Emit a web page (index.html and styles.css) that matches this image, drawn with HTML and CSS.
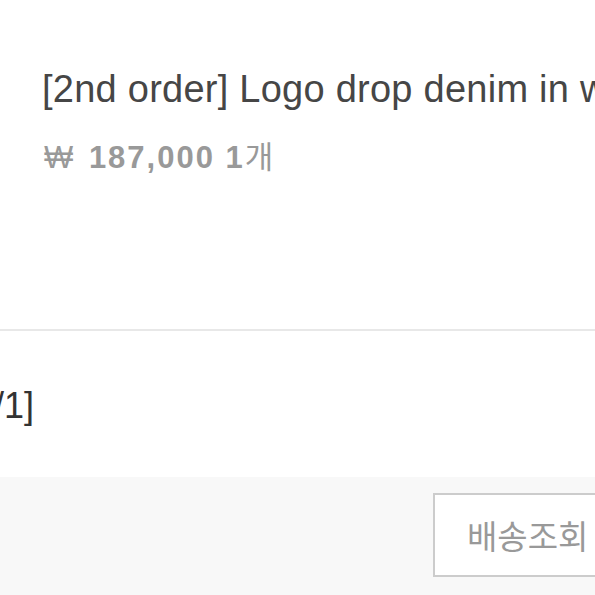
FILE: index.html
```html
<!DOCTYPE html>
<html lang="ko">
<head>
<meta charset="utf-8">
<link rel="stylesheet" href="styles.css">
</head>
<body>
<div class="page">
  <section class="product">
    <div class="title">[2nd order] Logo drop denim in washed black</div>
    <div class="price"><span class="won">₩</span> 187,000 1<span class="unit">개</span></div>
  </section>
  <div class="divider"></div>
  <div class="order-row"><span class="order-count">[1/1]</span></div>
  <div class="actions">
    <button class="btn">배송조회</button>
  </div>
</div>
</body>
</html>
```
FILE: styles.css
```css
html, body {
  margin: 0;
  padding: 0;
  background: #fff;
}
.page {
  width: 595px;
  height: 595px;
  overflow: hidden;
  font-family: "Liberation Sans", Arial, "Noto Sans CJK KR", sans-serif;
  display: flex;
  flex-direction: column;
}
.product {
  padding: 67px 0 0 42px;
  height: 329px;
  box-sizing: border-box;
  flex: none;
}
.title {
  font-size: 38px;
  line-height: 44px;
  letter-spacing: 0.25px;
  color: #464646;
  white-space: nowrap;
}
.price {
  margin-top: 26px;
  font-size: 31px;
  line-height: 36px;
  font-weight: bold;
  letter-spacing: 2px;
  color: #999;
  white-space: nowrap;
}
.won {
  font-weight: normal;
  letter-spacing: 0;
  margin-left: 2px;
  margin-right: 5px;
}
.unit {
  font-weight: normal;
  letter-spacing: 0;
  font-family: "Noto Sans CJK KR", sans-serif;
}
.divider {
  height: 2px;
  background: #e8e8e8;
  flex: none;
}
.order-row {
  height: 146px;
  box-sizing: border-box;
  padding-top: 53px;
  white-space: nowrap;
  flex: none;
}
.order-count {
  display: inline-block;
  margin-left: -36px;
  font-size: 36px;
  line-height: 44px;
  color: #333;
}
.actions {
  flex: 1;
  background: #f8f8f8;
  padding: 16px 0 0 433px;
  white-space: nowrap;
}
.btn {
  width: 220px;
  height: 84px;
  border: 2px solid #cccccc;
  background: #fff;
  color: #999;
  font-family: "Noto Sans CJK KR", sans-serif;
  font-size: 33px;
  text-align: left;
  padding: 0 0 0 32px;
  margin: 0;
  box-sizing: border-box;
}
```
